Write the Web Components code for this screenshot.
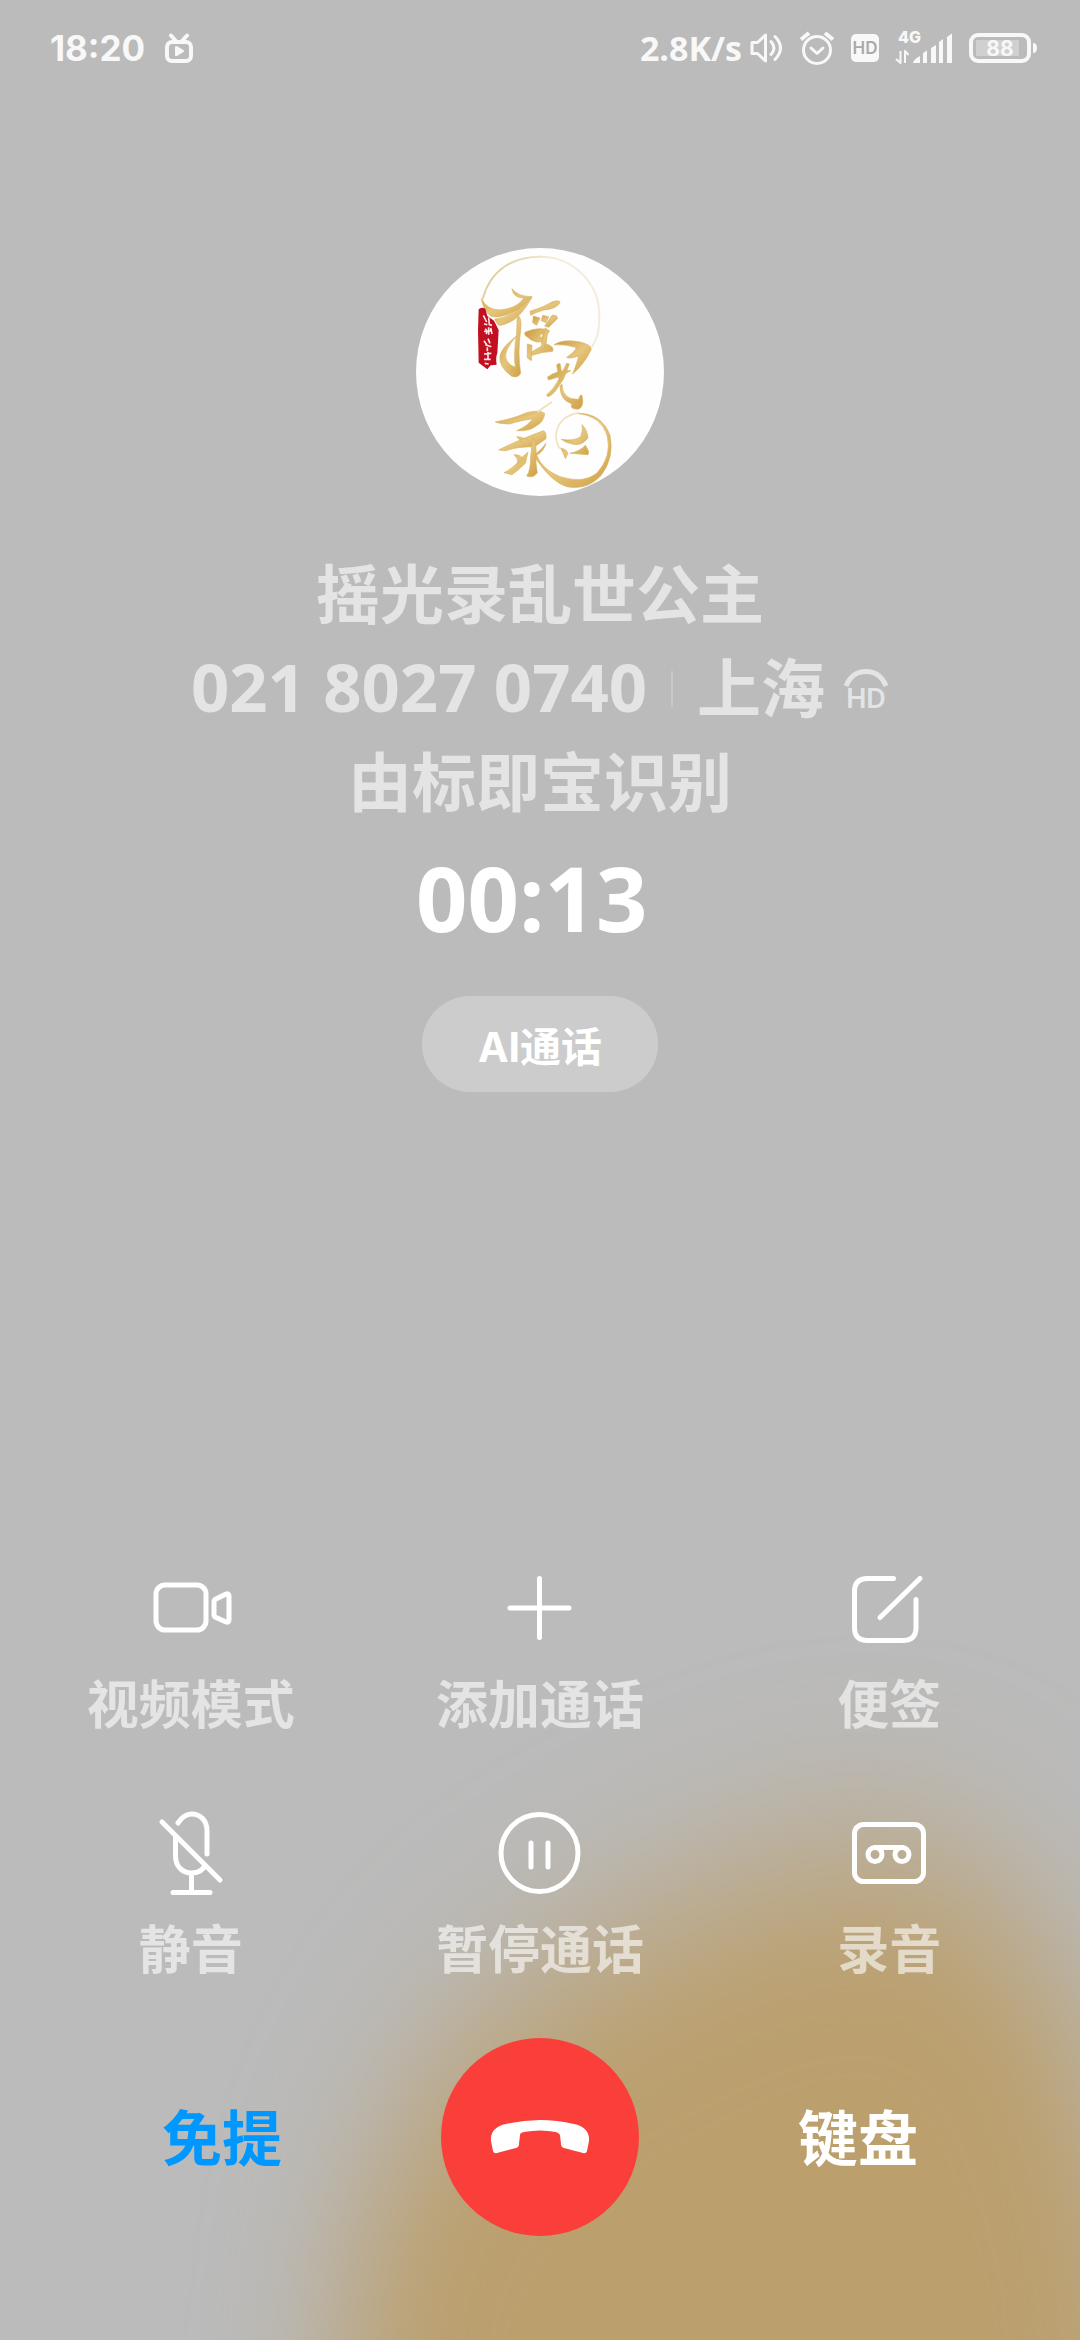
<!DOCTYPE html>
<html lang="zh-CN">
<head>
<meta charset="utf-8">
<meta name="viewport" content="width=device-width, initial-scale=1">
<title>通话</title>
<style>
  html, body { margin: 0; }
  body {
    background: #bbb;
    color: #fff;
    font-family: Inter, "Noto Sans CJK SC", sans-serif;
    font-weight: 700;
  }
</style>
</head>
<body>
<call-screen></call-screen>

<script>
const define = (name, markup) => {
  const template = document.createElement('template');
  template.innerHTML = markup;
  customElements.define(name, class extends HTMLElement {
    constructor() {
      super();
      this.attachShadow({ mode: 'open' }).append(template.content.cloneNode(true));
    }
  });
};

/* Top system bar: clock on the left, network and battery on the right */
define('status-bar', `
<style>
  :host { display: flex; justify-content: space-between; align-items: center; height: 96px; padding: 0 42px 0 50px; box-sizing: border-box; color: #f8f8f8; font-size: 35px; line-height: 40px; }
  .side { display: flex; align-items: center; }
  .left { gap: 20px; }
  .right { gap: 16px; }
  .sound { display: flex; align-items: center; gap: 8px; }
  svg { display: block; fill: none; stroke: #f8f8f8; stroke-linecap: round; stroke-linejoin: round; }
  .solid { fill: #f8f8f8; stroke: none; }
  .rate { font-family: "Open Sans", sans-serif; font-size: 34px; }
  text { stroke: none; font-family: Inter, sans-serif; }
</style>
<div class="side left">
  <span>18:20</span>
  <svg width="28" height="30" viewBox="0 0 28 30" stroke-width="4">
    <path d="M6 2.500L11 8M22 2.500L17 8" /><rect x="2" y="9" width="24" height="19" rx="5"/>
    <path class="solid" d="M10 14.500q0-2 2-1.200l6.500 3.800q1.500 1 0 2l-6.500 3.800q-2 .8-2-1.200z"/>
  </svg>
</div>
<div class="side right">
  <div class="sound">
    <span class="rate">2.8K/s</span>
    <svg width="33" height="32" viewBox="0 0 33 32" stroke-width="3">
      <path d="M2 10.500H7.500L15.500 3V29L7.500 21.500H2Z"/><path d="M21 9.500Q27 16 21 22.500M25 4.500Q36 16 25 27.500"/>
    </svg>
  </div>
  <svg width="36" height="36" viewBox="0 0 36 36" stroke-width="3">
    <circle cx="18" cy="20" r="13.500"/><path d="M12 18l6 5.500 6-5.500"/><path stroke-width="4" stroke-linecap="butt" d="M2 9.500L10 3M26 3l8 6.500"/>
  </svg>
  <svg width="28" height="28" viewBox="0 0 28 28">
    <rect class="solid" width="28" height="28" rx="5"/>
    <text x="14" y="20" text-anchor="middle" font-size="17" font-weight="600" fill="#aaa">HD</text>
  </svg>
  <svg width="58" height="46" viewBox="0 -6 58 46">
    <text x="3" y="12" font-size="16" font-weight="800" fill="#f8f8f8">4G</text>
    <path stroke-width="2" stroke-linecap="butt" d="M5.500 20V32L1 28M10 32V20L13.500 24"/>
    <path class="solid" d="M18 32q1-4 7-7v7zM28 32V22l4-2.500V32zM36 32V17l5-3v18zM44 32V11l4-3v24zM52 32V6l5-3.500V32z"/>
  </svg>
  <svg width="69" height="30" viewBox="0 0 69 30">
    <rect x="2" y="2" width="58" height="26" rx="7" stroke-width="4"/>
    <rect x="7" y="7" width="43" height="16" fill="#d0d0d0" stroke="none"/>
    <path class="solid" d="M64 10q4 0 4 5t-4 5z"/>
    <text x="31" y="22.500" text-anchor="middle" font-size="21" font-weight="700" fill="#f8f8f8">88</text>
  </svg>
</div>`);

/* Round caller picture: gold brush lettering with a red seal */
define('caller-avatar', `
<style>
  :host { display: block; width: 248px; height: 248px; border-radius: 50%; overflow: hidden; background: #fefefe; }
  svg { display: block; width: 100%; height: 100%; }
</style>
<svg viewBox="48 54 744 744" role="img" aria-label="头像">
  <defs>
    <linearGradient id="moon" x1="0" y1="0" x2="1" y2="0.500"><stop offset="0" stop-color="#d8c28a"/><stop offset=".5" stop-color="#f3eedd"/><stop offset="1" stop-color="#f2ecd8"/></linearGradient>
    <linearGradient id="gold" x1="0" y1="0" x2="1" y2="1"><stop offset="0" stop-color="#c9983c"/><stop offset=".5" stop-color="#e6c67c"/><stop offset="1" stop-color="#cf9f45"/></linearGradient>
  </defs>
  <path d="M248 208C270 120 340 78 425 80C520 82 600 160 598 260C597 310 590 330 575 352" fill="none" stroke="url(#moon)" stroke-width="6"/>
  <g fill="url(#gold)" stroke="#d9b360" stroke-width="2" stroke-linejoin="round">
    <path d="M244 206Q262 240 300 240Q350 236 372 204Q340 204 336 176Q354 200 396 200Q380 220 352 240Q300 268 272 258Q250 240 244 206Z"/>
    <path d="M284 268Q340 262 396 202Q362 262 330 276Q300 290 294 284Z"/>
    <path d="M352 256Q366 260 362 300Q352 370 362 430Q354 446 334 438Q296 410 300 378Q304 352 350 318Q310 362 318 386Q324 404 346 412Q340 370 350 310Z"/>
    <path d="M390 244Q430 232 456 216Q480 208 480 218Q470 236 432 240Q408 246 392 256Z"/>
    <path d="M400 258l20 6-10 22-12-8zM428 256l18 4-8 18-14-6zM456 256q18-2 16 10l-26 26-12-4z"/>
    <path d="M376 306Q420 288 448 302Q450 312 424 312Q410 324 440 326Q440 336 410 336Q388 330 384 322Q370 316 376 306ZM382 342l14 4-2 46-12-8zM394 366Q424 348 440 342Q464 350 458 364Q424 366 396 376Z"/>
    <path d="M426 322l10-28 8 6-8 54-12 4z"/>
    <path d="M462 344Q490 326 540 336Q574 344 574 358Q552 404 518 432Q532 396 536 378Q506 388 500 382Q530 362 528 352Q494 342 462 344Z"/>
    <path d="M470 404l10-4 8 44-10 10zM442 442Q470 420 512 422L484 438L446 450ZM500 400l8 2-18 46-26 38q-22 22-24 8 22-16 38-48zM486 462Q486 510 536 508Q540 492 546 496Q554 532 534 538Q506 536 516 522Q480 510 480 468Z"/>
    <path d="M286 576Q340 566 380 548Q420 538 434 550Q432 576 408 588Q390 604 350 602Q384 588 398 566Q350 574 330 582Q300 582 286 576Z"/>
    <path d="M296 660Q350 632 430 602Q440 606 438 626L404 650Q350 650 318 662ZM350 620Q380 622 392 640L380 650Q364 636 350 620Z"/>
    <path d="M398 622Q412 640 408 700L412 728Q400 746 380 738Q392 722 392 680ZM312 728Q340 716 366 682L384 666L376 700Q356 720 336 734ZM342 674q24 0 26 14l-14 14q0-20-12-28z"/>
    <path d="M438 640Q432 664 410 676Q426 718 480 740Q550 762 590 730Q636 680 622 618Q604 556 530 550Q604 548 630 616Q644 684 602 738Q560 782 500 770Q456 756 412 692L404 674Q424 660 438 640Z"/>
    <path d="M484 628Q522 634 542 620Q550 600 546 584Q562 600 564 624Q544 650 516 642Q496 638 484 628ZM482 654q18 4 22 16l-8 16q-6-18-14-32zM510 670q30-6 46-24 14 20 8 28-28-2-54-4z"/>
  </g>
  <path d="M538 548Q470 560 468 620Q470 650 482 656" fill="none" stroke="#efe3c4" stroke-width="5"/>
  <path d="M412 546Q434 530 456 516" fill="none" stroke="#eddfba" stroke-width="5"/>
  <path d="M236 238Q244 230 256 236L262 258L282 272L296 300L292 370Q286 382 290 404L272 406L262 418L246 406L236 398L234 300Z" fill="#c30f1f"/>
  <path d="M250 256l10 20m-8 6l10 2m4-22l2 22 8 2M256 296q8 10 2 16m8-20v22m6-20l4 18m-24-8l24-2M252 332l8 12m4-18l6 14m-14 4l18 6M262 352v12m-10 8l22-2m-10-4v22m-12 0h20m-18 12l12 2" fill="none" stroke="#fbe6e6" stroke-width="5"/>
</svg>`);

/* Small high-definition voice badge */
define('hd-badge', `
<style>
  :host { display: block; }
  svg { display: block; }
</style>
<svg width="46" height="54" viewBox="0 -6 46 54" fill="none" stroke="#e4e4e4">
  <path stroke-width="5" d="M3 18Q9 3.500 23 3.500T43 18"/>
  <text x="23" y="40" text-anchor="middle" font-family="Inter, sans-serif" font-size="27" font-weight="600" fill="#e4e4e4" stroke="none">HD</text>
</svg>`);

define('caller-info', `
<style>
  :host { display: flex; flex-direction: column; align-items: center; }
  .line { display: flex; align-items: baseline; margin: 0; color: #e4e4e4; font-size: 64px; line-height: 94px; font-weight: 700; }
  .number { font-family: "Open Sans", sans-serif; font-size: 67px; line-height: 80px; }
  .rule { align-self: center; width: 2px; height: 36px; margin: 0 24px; background: #cacaca; }
  hd-badge { align-self: center; margin-left: 18px; }
  /* wide enough for any digits, so that the running timer does not jump */
  time { min-width: 248px; font-family: "Open Sans", sans-serif; font-size: 90px; line-height: 134px; }
  .ai { margin-top: 32px; padding: 0 56px; height: 96px; border: 0; border-radius: 48px; background: #ccc; color: #fff; font: inherit; font-size: 41px; }
</style>
<h1 class="line"><slot name="name"></slot></h1>
<p class="line"><span class="number"><slot name="number"></slot></span><span class="rule"></span><slot name="place"></slot><hd-badge></hd-badge></p>
<p class="line"><slot name="source"></slot></p>
<time><slot name="time"></slot></time>
<button class="ai" type="button"><slot name="assist"></slot></button>`);

/* Icon above a label */
define('call-action', `
<style>
  :host { display: block; }
  button { display: flex; flex-direction: column; align-items: center; gap: 20px; width: 100%; padding: 0; border: 0; background: none; font: inherit; font-size: 52px; line-height: 72px; color: #ffffff99; }
  ::slotted(svg) { display: block; width: 84px; height: 84px; fill: none; stroke: #fff; stroke-width: 5; stroke-linecap: round; stroke-linejoin: round; }
</style>
<button type="button"><slot name="icon"></slot><span><slot></slot></span></button>`);

define('action-grid', `
<style>
  :host { display: grid; grid-template-columns: repeat(3, 1fr); row-gap: 69px; padding: 0 16px; }
</style>
<slot></slot>`);

define('call-dock', `
<style>
  :host { display: grid; grid-template-columns: repeat(3, 1fr); align-items: center; justify-items: center; padding: 0 63px; }
  button { border: 0; padding: 4px 0 0; background: none; color: #fff; font: inherit; font-size: 60px; line-height: 84px; }
  .speaker { color: #0097ff; }
  .hang { display: grid; place-items: center; width: 198px; height: 198px; padding: 0; border-radius: 50%; background: #fa3e3a; }
  svg { display: block; }
</style>
<button class="speaker" type="button" aria-pressed="true"><slot name="speaker"></slot></button>
<button class="hang" type="button" aria-label="挂断">
  <svg width="100" height="34" viewBox="0 0 100 34" fill="#fff">
    <path d="M1 21C0 12 6 6 16 4Q50-4 84 4C94 6 100 12 99 21L97 31Q96 34 93 33L74 28Q71 27 71 24L70 15Q69 13 66 12Q50 9 34 12Q30 13 30 15L29 24Q29 27 26 28L7 33Q4 34 3 31Z"/>
  </svg>
</button>
<button type="button"><slot name="keypad"></slot></button>`);

/* Warm glow that rises from the bottom edge, behind the controls */
define('warm-glow', `
<style>
  :host { display: block; position: absolute; left: 0; right: 0; bottom: 0; height: 36%; z-index: -1; }
  svg { display: block; width: 100%; height: 100%; }
</style>
<svg viewBox="0 0 1080 840" preserveAspectRatio="none" aria-hidden="true">
  <filter id="soft" filterUnits="userSpaceOnUse" x="-300" y="-300" width="1900" height="2000" color-interpolation-filters="sRGB"><feGaussianBlur stdDeviation="66 92"/></filter>
  <path filter="url(#soft)" fill="#bb9f6d" d="M325 1300L340 840C355 690 420 550 560 470C680 400 820 330 920 355C1040 390 1110 520 1160 840V1300Z"/>
</svg>`);

define('call-screen', `
<style>
  :host { display: flex; flex-direction: column; position: relative; z-index: 0; min-height: 100vh; box-sizing: border-box; padding-bottom: 104px; background: #bbb; }
  caller-avatar { align-self: center; margin: 152px 0 52px; }
  action-grid { margin-top: auto; padding-top: 40px; }
  call-dock { margin-top: 51px; }
</style>
<warm-glow></warm-glow>
<status-bar></status-bar>
<caller-avatar></caller-avatar>
<caller-info>
  <span slot="name">摇光录乱世公主</span>
  <span slot="number">021 8027 0740</span>
  <span slot="place">上海</span>
  <span slot="source">由标即宝识别</span>
  <span slot="time">00:13</span>
  <span slot="assist">AI通话</span>
</caller-info>
<action-grid>
  <call-action><svg slot="icon" viewBox="0 0 84 84"><rect x="7" y="19" width="50" height="45" rx="9"/><path d="M66 33.500L77 28q3-1 3 2V54q0 3-3 2L66 51q-1-1-1-2V35.500q0-1 1-2z"/></svg>视频模式</call-action>
  <call-action><svg slot="icon" viewBox="0 0 84 84"><path d="M41.500 12.500v59M12 42h59"/></svg>添加通话</call-action>
  <call-action><svg slot="icon" viewBox="-1 0 84 84"><path d="M45.500 12.500H19.500Q6.500 12.500 6.500 25.500V61.500Q6.500 74.500 19.500 74.500H55Q68 74.500 68 61.500V33.500M72 12.500L32 51.500"/></svg>便签</call-action>
  <call-action><svg slot="icon" viewBox="0 0 84 84"><path d="M29 12C33 6 38 3 42.500 3C52 3 58 10 58 20V43M26.500 26V45C26.500 56 34 62 42.500 62C49 62 54 59 56 54M42.500 62V80M24 81.500H61M13 11L71 69"/></svg>静音</call-action>
  <call-action><svg slot="icon" viewBox="0 0 84 84"><circle cx="41.500" cy="42" r="38.500"/><path d="M33 32v24M50 32v24"/></svg>暂停通话</call-action>
  <call-action><svg slot="icon" viewBox="-1 0 84 84"><rect x="6.500" y="13.500" width="69" height="57" rx="9"/><circle cx="27" cy="43.500" r="7"/><circle cx="54" cy="43.500" r="7"/><path d="M27 36.500H54"/></svg>录音</call-action>
</action-grid>
<call-dock>
  <span slot="speaker">免提</span>
  <span slot="keypad">键盘</span>
</call-dock>`);
</script>
</body>
</html>
